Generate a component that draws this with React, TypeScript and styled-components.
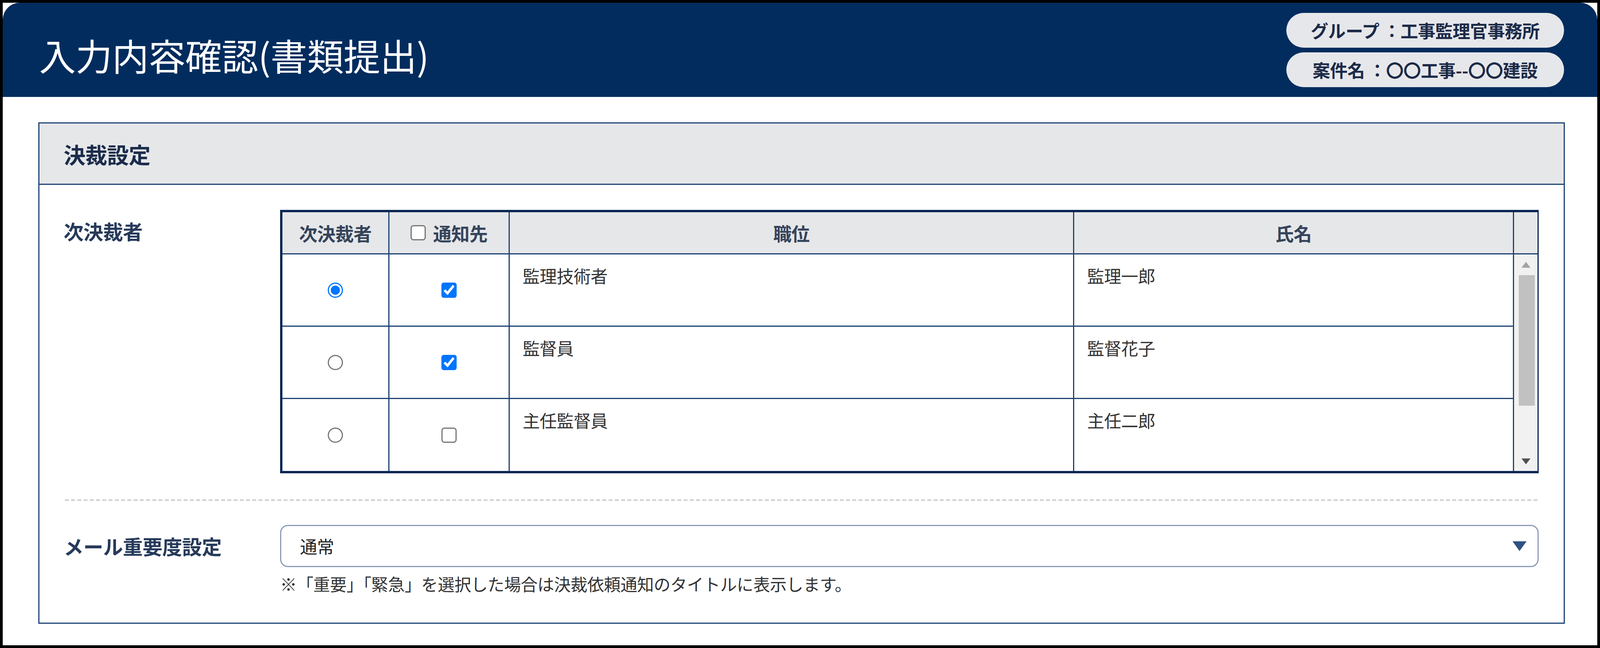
import styled, { createGlobalStyle } from "styled-components";

const GlobalStyle = createGlobalStyle`
  html, body {
    margin: 0;
    padding: 0;
    background: #fff;
  }
  body {
    font-family: "Noto Sans CJK JP", "Noto Sans", sans-serif;
    letter-spacing: -0.03em;
  }
`;

type Approver = {
  position: string;
  name: string;
  next: boolean;
  notify: boolean;
};

const approvers: Approver[] = [
  { position: "監理技術者", name: "監理一郎", next: true, notify: true },
  { position: "監督員", name: "監督花子", next: false, notify: true },
  { position: "主任監督員", name: "主任二郎", next: false, notify: false },
];

function App() {
  return (
    <>
      <GlobalStyle />
      <Frame>
        <TopBar>
          <PageTitle>入力内容確認(書類提出)</PageTitle>
          <PillStack>
            <InfoPill>グループ ：工事監理官事務所</InfoPill>
            <InfoPill>案件名 ：〇〇工事--〇〇建設</InfoPill>
          </PillStack>
        </TopBar>

        <Main>
          <Panel>
            <PanelHead>
              <PanelTitle>決裁設定</PanelTitle>
            </PanelHead>
            <PanelBody>
              <FieldRow>
                <FieldLabel $top={16}>次決裁者</FieldLabel>
                <Grid>
                  <HeadCell>次決裁者</HeadCell>
                  <HeadCell>
                    <CheckGroup>
                      <Check />
                      <span>通知先</span>
                    </CheckGroup>
                  </HeadCell>
                  <HeadCell>職位</HeadCell>
                  <HeadCell>氏名</HeadCell>
                  <HeadCell $last />

                  {approvers.map((a, i) => {
                    const last = i === approvers.length - 1;
                    return (
                      <Row key={a.name}>
                        <CenterCell $last={last}>
                          <Radio name="next" defaultChecked={a.next} />
                        </CenterCell>
                        <CenterCell $last={last}>
                          <Check defaultChecked={a.notify} />
                        </CenterCell>
                        <TextCell $last={last}>{a.position}</TextCell>
                        <TextCell $last={last}>{a.name}</TextCell>
                      </Row>
                    );
                  })}

                  <ScrollTrack>
                    <ScrollButton>
                      <svg width="23" height="15" viewBox="0 0 23 15">
                        <polygon points="11.5,0 23,15 0,15" fill="#a3a3a3" />
                      </svg>
                    </ScrollButton>
                    <ScrollThumb />
                    <ScrollSpacer />
                    <ScrollButton $h={50}>
                      <svg width="23" height="15" viewBox="0 0 23 15">
                        <polygon points="0,0 23,0 11.5,15" fill="#505050" />
                      </svg>
                    </ScrollButton>
                  </ScrollTrack>
                </Grid>
              </FieldRow>

              <Divider />

              <FieldRow>
                <FieldLabel $center>メール重要度設定</FieldLabel>
                <div>
                  <SelectBox>
                    <span>通常</span>
                    <svg width="36" height="25" viewBox="0 0 36 25">
                      <polygon points="0,0 36,0 18,25" fill="#2d5382" />
                    </svg>
                  </SelectBox>
                  <Note>
                    ※「重要」「緊急」を選択した場合は決裁依頼通知のタイトルに表示します。
                  </Note>
                </div>
              </FieldRow>
            </PanelBody>
          </Panel>
        </Main>
      </Frame>
    </>
  );
}

export default App;

const Frame = styled.div`
  width: 100vw;
  height: 1658px;
  box-sizing: border-box;
  border: 7px solid #000;
  background: #fff;
  display: flex;
  flex-direction: column;
  overflow: hidden;
`;

const TopBar = styled.header`
  height: 241px;
  flex-shrink: 0;
  box-sizing: border-box;
  background: #022c5e;
  border-radius: 44px 44px 0 0;
  display: flex;
  justify-content: space-between;
  align-items: flex-start;
  padding: 26px 85px 0 93px;
`;

const PageTitle = styled.h1`
  margin: 51px 0 0;
  font-size: 94px;
  font-weight: 400;
  line-height: 1.2;
  color: #fff;
`;

const PillStack = styled.div`
  display: flex;
  flex-direction: column;
  gap: 12px;
`;

const InfoPill = styled.div`
  width: 711px;
  height: 89px;
  border-radius: 45px;
  background: #e6e7ea;
  display: flex;
  align-items: center;
  justify-content: center;
  font-size: 45px;
  font-weight: 700;
  color: #1b2a48;
  white-space: pre;
`;

const Main = styled.main`
  flex: 1;
  box-sizing: border-box;
  padding: 65px 83px 0 91px;
`;

const Panel = styled.section`
  border: 3px solid #1f4577;
  display: flex;
  flex-direction: column;
`;

const PanelHead = styled.div`
  height: 157px;
  box-sizing: border-box;
  background: #e6e7e9;
  border-bottom: 3px solid #1f4577;
  display: flex;
  align-items: center;
  padding-left: 62px;
`;

const PanelTitle = styled.h2`
  margin: 0;
  font-size: 56px;
  font-weight: 700;
  color: #1b2c4b;
`;

const PanelBody = styled.div`
  padding: 64px 64px 67px 62px;
`;

const FieldRow = styled.div`
  display: grid;
  grid-template-columns: 554px 1fr;
  align-items: start;
`;

const FieldLabel = styled.div<{ $top?: number; $center?: boolean }>`
  font-size: 51px;
  font-weight: 700;
  line-height: 1.5;
  color: #263a5a;
  padding-top: ${(p) => p.$top ?? 0}px;
  ${(p) =>
    p.$center &&
    `
    height: 108px;
    display: flex;
    align-items: center;
  `}
`;

const Grid = styled.div`
  display: grid;
  grid-template-columns: 274px 308px 1fr 1126px 60px;
  grid-template-rows: 108px 185px 185px 184px;
  border-style: solid;
  border-color: #0a2653;
  border-width: 6px 3px 6px 6px;
`;

const HeadCell = styled.div<{ $last?: boolean }>`
  box-sizing: border-box;
  background: #e6e7e9;
  border-bottom: 3px solid #1e4272;
  border-right: ${(p) => (p.$last ? "none" : "3px solid #1e4272")};
  display: flex;
  align-items: center;
  justify-content: center;
  font-size: 47px;
  font-weight: 700;
  color: #35445a;
`;

const CheckGroup = styled.label`
  display: flex;
  align-items: center;
  gap: 19px;
`;

const Row = styled.div`
  display: contents;
`;

const CenterCell = styled.div<{ $last?: boolean }>`
  box-sizing: border-box;
  border-right: 3px solid #1e4272;
  border-bottom: ${(p) => (p.$last ? "none" : "3px solid #1e4272")};
  display: flex;
  align-items: center;
  justify-content: center;
`;

const TextCell = styled.div<{ $last?: boolean }>`
  box-sizing: border-box;
  border-right: 3px solid #1e4272;
  border-bottom: ${(p) => (p.$last ? "none" : "3px solid #1e4272")};
  padding: 21px 33px 0;
  font-size: 44px;
  line-height: 1.5;
  color: #333;
`;

const Radio = styled.input.attrs({ type: "radio" })`
  zoom: 3;
  margin: 0;
`;

const Check = styled.input.attrs({ type: "checkbox" })`
  zoom: 3;
  margin: 0;
`;

const ScrollTrack = styled.div`
  grid-column: 5;
  grid-row: 2 / 5;
  background: #f1f1f1;
  display: flex;
  flex-direction: column;
`;

const ScrollButton = styled.div<{ $h?: number }>`
  height: ${(p) => p.$h ?? 53}px;
  display: flex;
  align-items: center;
  justify-content: center;
`;

const ScrollThumb = styled.div`
  height: 334px;
  margin: 0 7px 0 12px;
  background: #c1c1c1;
`;

const ScrollSpacer = styled.div`
  flex: 1;
`;

const Divider = styled.div`
  height: 3px;
  margin: 67px -1px 62px 3px;
  background: repeating-linear-gradient(
    90deg,
    #c4c4c4 0 10px,
    transparent 10px 16px
  );
`;

const SelectBox = styled.div`
  height: 108px;
  box-sizing: border-box;
  border: 3px solid #8d9bb8;
  border-radius: 20px;
  display: flex;
  align-items: center;
  justify-content: space-between;
  padding: 0 28px 0 48px;
  font-size: 44px;
  color: #222;
`;

const Note = styled.p`
  margin: 10px 0 0;
  font-size: 43px;
  line-height: 1.5;
  color: #333;
`;
